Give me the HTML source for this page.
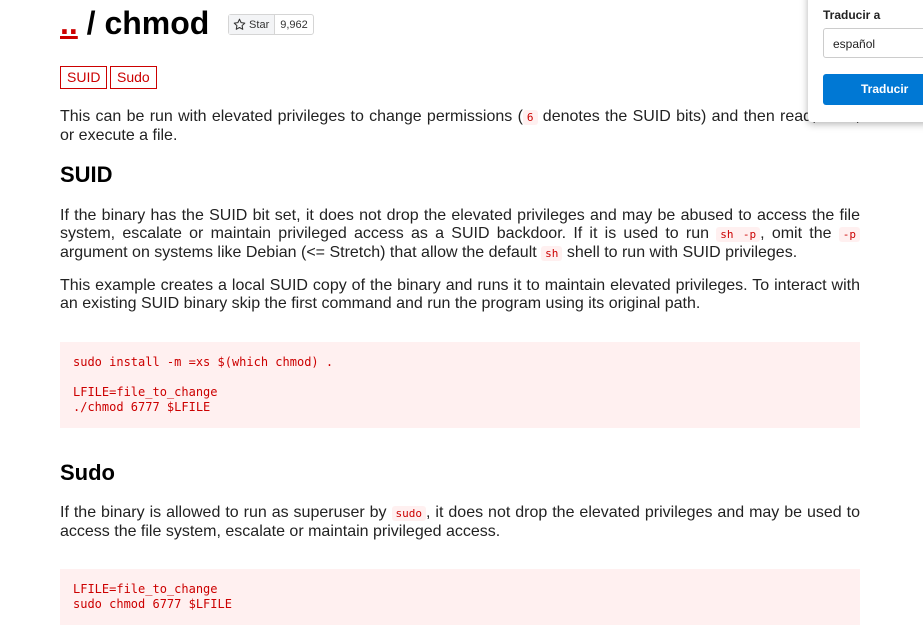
<!DOCTYPE html>
<html><head><meta charset="utf-8"><style>
html,body{margin:0;padding:0;background:#fff;}
body{width:923px;height:644px;overflow:hidden;position:relative;font-family:"Liberation Sans",Arial,sans-serif;color:#222;}
.c{position:absolute;left:60px;width:800px;}
h1{position:absolute;left:60px;top:4px;margin:0;font-size:32px;font-weight:bold;color:#000;line-height:38px;}
h1 a{color:#c00;text-decoration:underline;}
.star{position:absolute;left:228px;top:14px;height:19px;border:1px solid #d5d5d5;border-radius:3px;font-size:11px;display:flex;color:#333;}
.star .l{background:#f3f4f6;padding:0 5px 0 4px;display:flex;align-items:center;border-right:1px solid #d5d5d5;}
.star .r{padding:0 5px;display:flex;align-items:center;}
.tag{position:absolute;top:66px;height:21px;border:1px solid #c00;color:#c00;font-size:14px;line-height:21px;padding:0 6px;}
p{margin:0;font-size:16px;line-height:18px;text-align:justify;}
h2{margin:0;font-size:22px;font-weight:bold;color:#000;}
code{font-family:"DejaVu Sans Mono","Liberation Mono",monospace;font-size:11px;color:#c00;background:#fff0f0;padding:1px 4px;border-radius:3px;}
pre{position:absolute;left:60px;width:800px;margin:0;background:#fff0f0;color:#c00;font-family:"DejaVu Sans Mono","Liberation Mono",monospace;font-size:12px;line-height:15px;box-sizing:border-box;padding:13px 13px;}
.pop{position:absolute;left:808px;top:-10px;width:130px;height:132px;background:#fff;box-shadow:0 2px 8px rgba(0,0,0,.3);border-radius:4px;}
</style></head><body>
<h1><a>..</a> / chmod</h1>
<div class="star"><div class="l"><svg width="13" height="13" viewBox="0 0 16 16"><path d="M8 1.5l2 4.2 4.5.6-3.3 3.1.8 4.5L8 11.7 4 13.9l.8-4.5L1.5 6.3 6 5.7z" fill="none" stroke="#333" stroke-width="1.3" stroke-linejoin="round"/></svg>&nbsp;Star</div><div class="r">9,962</div></div>
<div class="tag" style="left:60px">SUID</div>
<div class="tag" style="left:110px">Sudo</div>
<p class="c" style="top:108px">This can be run with elevated privileges to change permissions (<code>6</code> denotes the SUID bits) and then read, write, or execute a file.</p>
<h2 class="c" style="top:162px">SUID</h2>
<p class="c" style="top:207px">If the binary has the SUID bit set, it does not drop the elevated privileges and may be abused to access the file system, escalate or maintain privileged access as a SUID backdoor. If it is used to run <code>sh -p</code>, omit the <code>-p</code> argument on systems like Debian (&lt;= Stretch) that allow the default <code>sh</code> shell to run with SUID privileges.</p>
<p class="c" style="top:277px">This example creates a local SUID copy of the binary and runs it to maintain elevated privileges. To interact with an existing SUID binary skip the first command and run the program using its original path.</p>
<pre style="top:342px;height:86px;">sudo install -m =xs $(which chmod) .

LFILE=file_to_change
./chmod 6777 $LFILE</pre>
<h2 class="c" style="top:460px">Sudo</h2>
<p class="c" style="top:504px">If the binary is allowed to run as superuser by <code>sudo</code>, it does not drop the elevated privileges and may be used to access the file system, escalate or maintain privileged access.</p>
<pre style="top:569px;height:56px;">LFILE=file_to_change
sudo chmod 6777 $LFILE</pre>
<div class="pop">
<div style="position:absolute;left:15px;top:18px;font-size:12px;font-weight:bold;color:#222;">Traducir a</div>
<div style="position:absolute;left:15px;top:38px;width:120px;height:30px;border:1px solid #ccc;border-radius:3px;font-size:12px;line-height:30px;padding-left:9px;box-sizing:border-box;">español</div>
<div style="position:absolute;left:15px;top:84px;width:120px;height:31px;background:#0078d4;border-radius:3px;color:#fff;font-size:12px;font-weight:bold;line-height:31px;padding-left:38px;box-sizing:border-box;">Traducir</div>
</div>
</body></html>
